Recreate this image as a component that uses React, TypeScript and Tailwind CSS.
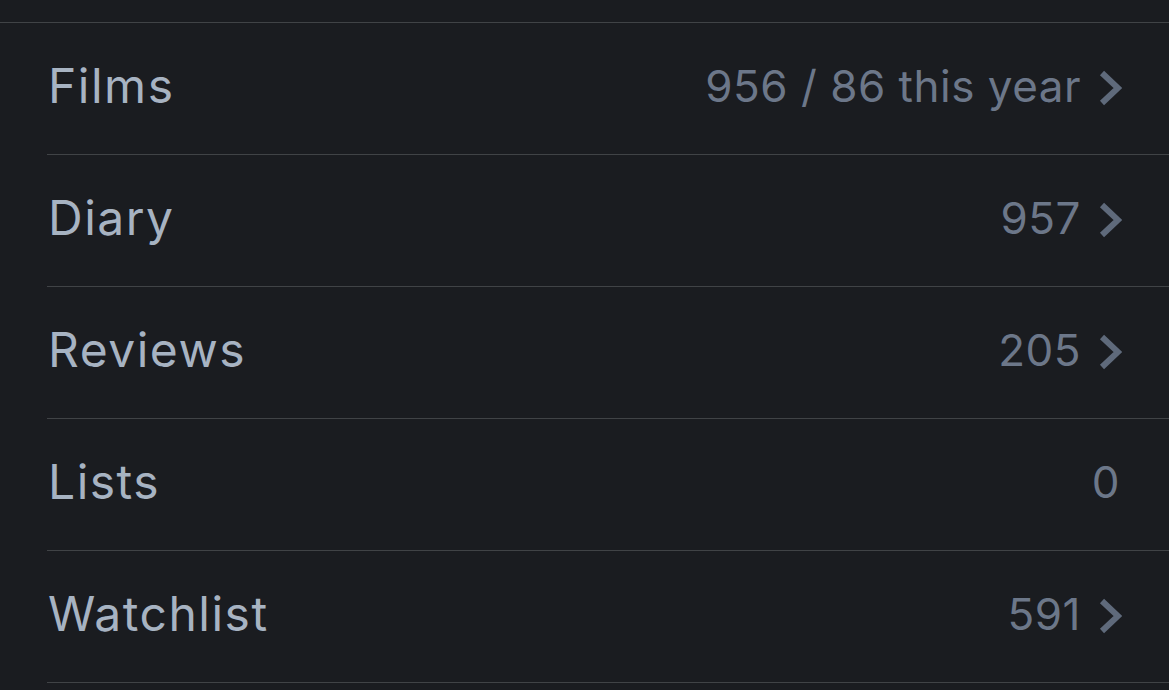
const rows = [
  { label: "Films", value: "956 / 86 this year", link: true },
  { label: "Diary", value: "957", link: true },
  { label: "Reviews", value: "205", link: true },
  { label: "Lists", value: "0", link: false },
  { label: "Watchlist", value: "591", link: true },
];

function Chevron() {
  return (
    <svg
      width="24"
      height="36"
      viewBox="0 0 24 36"
      fill="none"
      className="ml-[17px] -mr-[2px] mt-[4px]"
    >
      <path
        d="M4 3 L20 18 L4 33"
        stroke="#5f6a7b"
        strokeWidth="6"
        strokeLinejoin="miter"
      />
    </svg>
  );
}

export default function App() {
  return (
    <div
      className="w-[1169px] h-[690px] overflow-hidden bg-[#1a1c20]"
      style={{ fontFamily: "Inter, 'Open Sans', sans-serif" }}
    >
      <div className="h-[23px] border-b border-[#404346]" />
      <div className="pl-[47px]">
        {rows.map((row) => (
          <div
            key={row.label}
            className="h-[132px] pb-[6px] flex items-center justify-between border-b border-[#404346] pr-[49px]"
          >
            <span className="pl-[1px] text-[48px] tracking-[1.5px] text-[#a7b3c2]">
              {row.label}
            </span>
            <span className="flex items-center text-[44px] tracking-[0.5px] text-[#6c7789]">
              {row.value}
              {row.link && <Chevron />}
            </span>
          </div>
        ))}
      </div>
    </div>
  );
}
